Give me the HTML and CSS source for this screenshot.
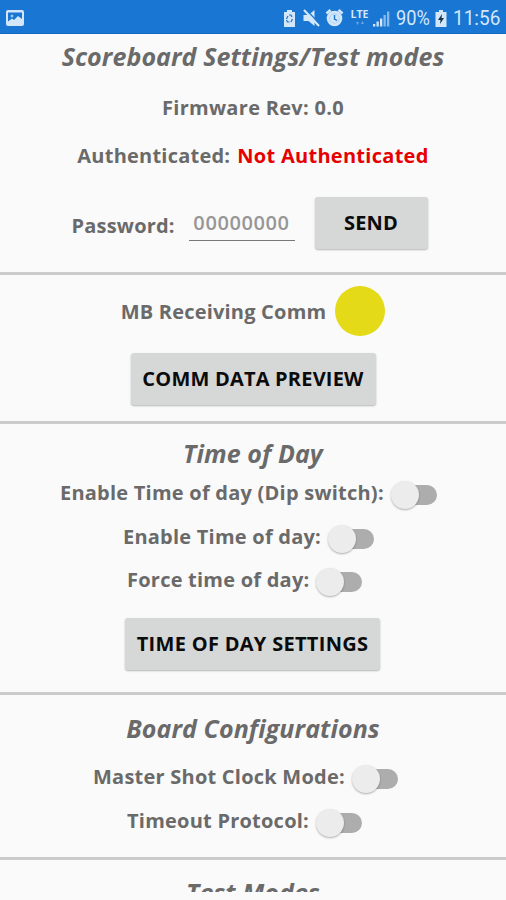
FILE: index.html
```html
<!DOCTYPE html>
<html lang="en">
<head>
<meta charset="utf-8">
<title>Scoreboard Settings</title>
<link rel="stylesheet" href="styles.css">
</head>
<body>
<header class="status">
  <svg class="picture" viewBox="0 0 18 16"><path fill="#d4e7fa" fill-rule="evenodd" d="M2 0h14a2 2 0 0 1 2 2v12a2 2 0 0 1-2 2H2a2 2 0 0 1-2-2V2a2 2 0 0 1 2-2zm0 2.500v9l4-3 2 1.500 4-4 4 3v-6.500zM6 4l.6 1.400L8 6l-1.400.6L6 8l-.6-1.400L4 6l1.400-.6z"/></svg>
  <svg class="tray" viewBox="0 0 122 34" fill="#d4e7fa">
    <path d="M4 10h5v2h3v15H1V12h3z"/>
    <path d="M3.500 19l1.500-3M6 15h2l1 2M9.500 19l-1.500 3M6.500 22H4.500l-1-2" fill="none" stroke="#1976d2" stroke-width="1.200"/>
    <path d="M20.500 15h5l6-5v16l-6-5h-5z"/>
    <path d="M22.500 9l15 16" stroke="#1976d2" stroke-width="1.500"/><path d="M21 10l15 16" stroke="#d4e7fa" stroke-width="2.200"/>
    <circle cx="51.500" cy="18.500" r="7.800"/><path d="M43.500 13.500l4-3.500M59.500 13.500l-4-3.500" stroke="#d4e7fa" stroke-width="2.800"/>
    <circle cx="51.500" cy="18.500" r="5" fill="#8fbfee"/><circle cx="51.500" cy="18.500" r="4.600" fill="#d4e7fa"/><path d="M51.500 15v4l2.500 1.500" fill="none" stroke="#1976d2" stroke-width="1.400"/>
    <text class="lte" x="67.500" y="18" textLength="18" lengthAdjust="spacingAndGlyphs">LTE</text>
    <path d="M73 22h3l-1.500 3zM78 24h3l-1.500-3z" opacity=".45"/>
    <path d="M90 24h2.300v2.500H90zM93.500 21.500h2.300v5h-2.300zM97 18.500h2.300v8H97z"/><path d="M100.500 15h2.300v11.500h-2.300zM104 11.500h2.300v15H104z" opacity=".6"/>
  </svg>
  <span class="percent">90%</span>
  <svg class="battery" viewBox="0 0 12 17"><path fill="#d4e7fa" d="M4 0h4v2h3.500v15H.5V2H4z"/><path fill="#17324d" d="M7 4L3 10h2.500L5 14l4-6H6.500z"/></svg>
  <span class="clock">11:56</span>
</header>
<main>
  <section class="auth">
    <h2>Scoreboard Settings/Test modes</h2>
    <p class="row firmware"><span>Firmware Rev: 0.0</span></p>
    <p class="row state"><span>Authenticated:</span><strong>Not Authenticated</strong></p>
    <div class="login"><label for="pw">Password:</label><input id="pw" placeholder="00000000"><button class="send">SEND</button></div>
  </section>
  <section class="comm">
    <div class="receiving"><span>MB Receiving Comm</span><i class="lamp"></i></div>
    <button class="preview">COMM DATA PREVIEW</button>
  </section>
  <section class="time">
    <h2>Time of Day</h2>
    <div class="row dip"><span>Enable Time of day (Dip switch):</span><i class="switch"></i></div>
    <div class="row enable"><span>Enable Time of day:</span><i class="switch"></i></div>
    <div class="row force"><span>Force time of day:</span><i class="switch"></i></div>
    <button class="settings">TIME OF DAY SETTINGS</button>
  </section>
  <section class="board">
    <h2>Board Configurations</h2>
    <div class="row master"><span>Master Shot Clock Mode:</span><i class="switch"></i></div>
    <div class="row timeout"><span>Timeout Protocol:</span><i class="switch"></i></div>
  </section>
  <section class="tests"><h2>Test Modes</h2></section>
</main>
</body>
</html>
```
FILE: styles.css
```css
* { box-sizing: border-box; }
body { margin: 0; height: 900px; overflow: hidden; background: #fafafa; color: #6a6a6a; font: 700 20px/28px "Open Sans", sans-serif; white-space: nowrap; }
h2, p { margin: 0; }
h2 { font: italic 700 25px/34px "Open Sans", sans-serif; text-align: center; letter-spacing: .08px; }
.status { height: 34px; background: #1976d2; border-bottom: 1px solid #1268bd; display: flex; align-items: center; color: #d4e7fa; font: 400 20px/34px Roboto, sans-serif; }
.picture { width: 18px; height: 16px; margin-left: 6px; margin-top: 3px; }
.tray { width: 122px; height: 34px; margin-left: 259px; flex: none; }
.lte { font: 700 10px "Open Sans", sans-serif; }
.percent { width: 39px; margin-left: -9px; transform: scaleX(.91); transform-origin: left; padding-top: 3px; }
.battery { width: 12px; height: 17px; margin-top: 4px; flex: none; }
.clock { margin-left: 6px; padding-top: 3px; transform: scaleX(.95); transform-origin: left; }
section { border-bottom: 3px solid #cbcbcb; display: flex; flex-direction: column; align-items: center; }
.row { height: 28px; display: flex; align-items: center; letter-spacing: .23px; }
.auth { height: 241px; padding-top: 5px; }
.firmware { margin-top: 21px; letter-spacing: .3px; }
.state { margin-top: 20px; gap: 7px; }
.state strong { color: #e60000; font-weight: 700; letter-spacing: .28px; }
.login { display: flex; height: 52px; margin: 27px 7px 0 0; align-items: flex-start; }
.login label { padding-top: 15px; width: 117px; letter-spacing: .2px; }
.login input { width: 106px; height: 44px; padding: 8px 0 0; border: 0; border-bottom: 1px solid #777; background: transparent; font: 600 20px/28px "Open Sans", sans-serif; letter-spacing: .6px; text-align: center; }
.login input::placeholder { color: #969696; opacity: 1; }
button { height: 52px; border: 0; border-radius: 3px; padding: 0; background: #d6d8d7; color: #0b0b0b; font: 700 20px/52px "Open Sans", sans-serif; letter-spacing: .2px; box-shadow: 0 1px 2px rgba(0,0,0,.28); }
.send { width: 113px; margin-left: 20px; }
.comm { height: 149px; padding-top: 11px; }
.receiving { display: flex; align-items: center; height: 50px; gap: 9px; letter-spacing: .2px; }
.receiving span { padding-top: 1px; }
.lamp { width: 50px; height: 50px; border-radius: 50%; background: #e4da17; }
.preview { width: 245px; margin-top: 17px; }
.time { height: 271px; padding-top: 12px; }
.time .row, .board .row { align-self: flex-start; }
.dip { margin: 9px 0 0 60px; }
.enable { margin: 16px 0 0 123px; }
.force { margin: 15px 0 0 127px; }
.settings { width: 255px; margin: 24px 1px 0 0; letter-spacing: .3px; }
.board { height: 165px; padding-top: 16px; }
.master { margin: 18px 0 0 93px; }
.timeout { margin: 16px 0 0 127px; }
.tests { height: 32px; padding-top: 15px; border: 0; overflow: hidden; }
.switch { display: flex; align-items: center; width: 46px; height: 20px; margin: 3px 0 0 7px; border-radius: 10px; background: linear-gradient(90deg, transparent 16px, #adadad 16px); }
.switch::before { content: ""; width: 28px; height: 28px; flex: none; border-radius: 50%; background: #ececec; box-shadow: 0 1px 2px rgba(0,0,0,.3); }
```
